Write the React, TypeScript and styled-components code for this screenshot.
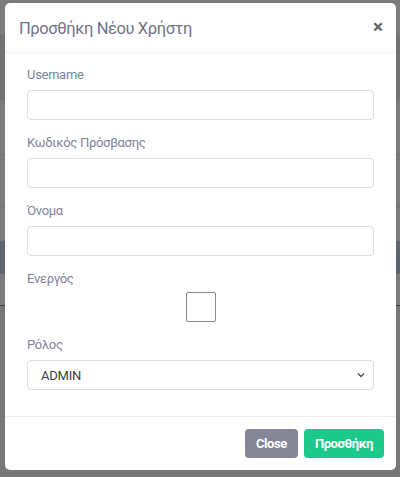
import React from "react";
import styled, { createGlobalStyle } from "styled-components";

const Global = createGlobalStyle`
  html, body { margin: 0; padding: 0; }
  body { font-family: Roboto, "Noto Sans", Arial, sans-serif; background: #7a7a7a; }
  * { box-sizing: border-box; }
`;

const Page = styled.div`
  position: relative;
  width: 400px;
  height: 477px;
  overflow: hidden;
`;

const Backdrop = styled.div`
  display: flex;
  flex-direction: column;
  height: 100%;
`;

const Band = styled.div<{ $h: number; $bg: string; $line?: string }>`
  height: ${(p) => p.$h}px;
  flex: none;
  background: ${(p) => p.$bg};
  border-bottom: ${(p) => (p.$line ? `1px solid ${p.$line}` : "none")};
`;

const Modal = styled.div`
  position: absolute;
  left: 5px;
  top: 3px;
  width: 391px;
  background: #fff;
  border-radius: 5px;
  display: flex;
  flex-direction: column;
`;

const Header = styled.div`
  height: 50px;
  display: flex;
  align-items: center;
  justify-content: space-between;
  padding: 2px 12px 0 14px;
  border-bottom: 1px solid #eef0f7;
`;

const Title = styled.h5`
  margin: 0;
  font-size: 16.5px;
  letter-spacing: -0.4px;
  font-weight: 400;
  color: #717488;
`;

const CloseX = styled.span`
  font-size: 19px;
  font-weight: 700;
  color: #666;
  line-height: 1;
  margin-top: -5px;
  margin-right: 1px;
`;

const Body = styled.div`
  padding: 11px 22px 26px 22px;
  display: flex;
  flex-direction: column;
`;

const Group = styled.div<{ $last?: boolean }>`
  display: flex;
  flex-direction: column;
  margin-bottom: ${(p) => (p.$last ? 0 : 12)}px;
`;

const Label = styled.label`
  font-size: 13px;
  letter-spacing: -0.3px;
  line-height: 21px;
  color: #80849a;
  margin-bottom: 5px;
`;

const Input = styled.input`
  height: 30px;
  border: 1px solid #dcdde8;
  border-radius: 4px;
  background: #fff;
  font: inherit;
  padding: 0 12px;
  outline: none;
`;

const CheckRow = styled.div`
  display: flex;
  justify-content: center;
  margin-top: -2px;
`;

const Check = styled.div`
  width: 30px;
  height: 30px;
  border: 1px solid #8a8a8a;
  border-radius: 2px;
  background: #fff;
`;

const SelectBox = styled.div`
  height: 30px;
  border: 1px solid #dcdde8;
  border-radius: 4px;
  display: flex;
  align-items: center;
  justify-content: space-between;
  padding: 0 7px 0 13px;
  font-size: 13px;
  letter-spacing: -0.2px;
  color: #3b3e4a;
`;

const Footer = styled.div`
  border-top: 1px solid #eef0f7;
  display: flex;
  justify-content: flex-end;
  gap: 6px;
  padding: 12px;
`;

const Button = styled.button<{ $variant: "gray" | "green" }>`
  height: 29px;
  border: none;
  border-radius: 4px;
  padding: 0 11px;
  font-family: Roboto, Arial, sans-serif;
  font-size: 13px;
  letter-spacing: -0.4px;
  font-weight: 700;
  color: #fff;
  background: ${(p) => (p.$variant === "gray" ? "#858796" : "#1cc88a")};
`;

export default function App() {
  return (
    <Page>
      <Global />
      <Backdrop>
        <Band $h={35} $bg="#7b7b7b" />
        <Band $h={65} $bg="#727272" />
        <Band $h={55} $bg="#7b7b7b" $line="#6f6f6f" />
        <Band $h={52} $bg="#7b7b7b" $line="#6f6f6f" />
        <Band $h={34} $bg="#7b7b7b" />
        <Band $h={33} $bg="#5f6570" />
        <Band $h={32} $bg="#7b7b7b" $line="#3d3d3d" />
        <Band $h={170} $bg="#787878" />
      </Backdrop>
      <Modal>
        <Header>
          <Title>Προσθήκη Νέου Χρήστη</Title>
          <CloseX>×</CloseX>
        </Header>
        <Body>
          <Group>
            <Label>Username</Label>
            <Input />
          </Group>
          <Group>
            <Label>Κωδικός Πρόσβασης</Label>
            <Input />
          </Group>
          <Group>
            <Label>Όνομα</Label>
            <Input />
          </Group>
          <Group>
            <Label>Ενεργός</Label>
            <CheckRow>
              <Check />
            </CheckRow>
          </Group>
          <Group $last>
            <Label>Ρόλος</Label>
            <SelectBox>
              <span>ADMIN</span>
              <svg width="10" height="8" viewBox="0 0 10 8">
                <path d="M2 2.5 L5 5.5 L8 2.5" fill="none" stroke="#4a4d5a" strokeWidth="1.4" />
              </svg>
            </SelectBox>
          </Group>
        </Body>
        <Footer>
          <Button $variant="gray">Close</Button>
          <Button $variant="green">Προσθήκη</Button>
        </Footer>
      </Modal>
    </Page>
  );
}
